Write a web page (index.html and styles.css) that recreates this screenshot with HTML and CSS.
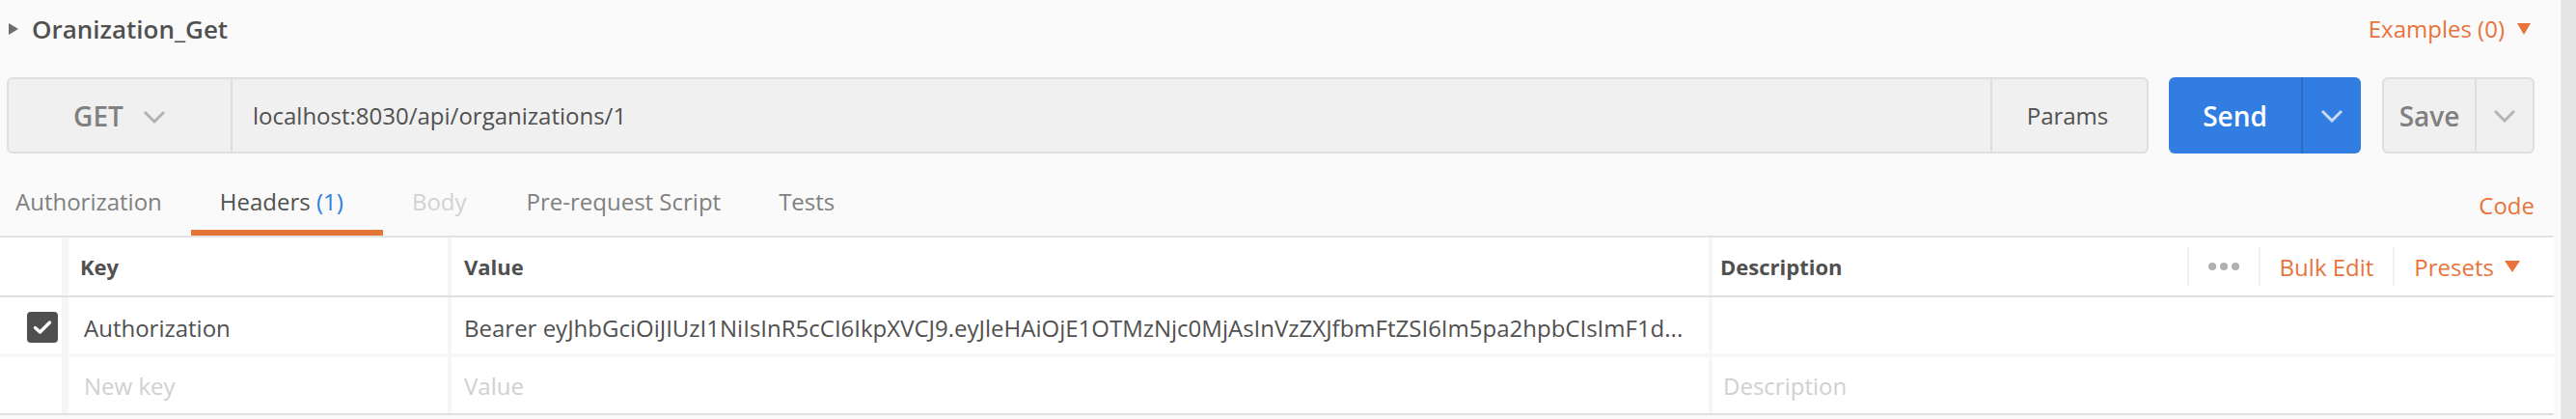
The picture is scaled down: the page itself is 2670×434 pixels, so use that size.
FILE: index.html
```html
<!DOCTYPE html>
<html>
<head>
<meta charset="utf-8">
<link rel="stylesheet" href="styles.css">
</head>
<body>
<div class="app">
  <div class="main">
    <div class="title-row">
      <div class="title"><span class="caret-right"></span><span class="title-text">Oranization_Get</span></div>
      <div class="examples">Examples (0)<span class="tri-down"></span></div>
    </div>

    <div class="bar">
      <div class="url-group">
        <div class="method">
          <span>GET</span>
          <svg class="chev" width="24" height="14" viewBox="0 0 24 14"><path d="M2 2 L12 12 L22 2" fill="none" stroke="#b4b4b4" stroke-width="3"/></svg>
        </div>
        <div class="url">localhost:8030/api/organizations/1</div>
        <div class="params">Params</div>
      </div>
      <div class="send">
        <div class="send-main">Send</div>
        <div class="send-arrow"><svg width="24" height="14" viewBox="0 0 24 14"><path d="M2 2 L12 12 L22 2" fill="none" stroke="#c9d9f0" stroke-width="3"/></svg></div>
      </div>
      <div class="save">
        <div class="save-main">Save</div>
        <div class="save-arrow"><svg width="24" height="14" viewBox="0 0 24 14"><path d="M2 2 L12 12 L22 2" fill="none" stroke="#b4b4b4" stroke-width="3"/></svg></div>
      </div>
    </div>

    <div class="tabs-row">
      <div class="tabs">
        <div class="tab first">Authorization</div>
        <div class="tab active">Headers <span class="count">(1)</span></div>
        <div class="tab disabled">Body</div>
        <div class="tab">Pre-request Script</div>
        <div class="tab">Tests</div>
      </div>
      <div class="code">Code</div>
    </div>

    <div class="table">
      <div class="trow thead">
        <div class="cell c-check"></div>
        <div class="vsep wide"></div>
        <div class="cell c-key">Key</div>
        <div class="vsep"></div>
        <div class="cell c-val">Value</div>
        <div class="vsep"></div>
        <div class="cell c-desc">
          <span>Description</span>
          <div class="tools">
            <div class="tool dots"><span></span><span></span><span></span></div>
            <div class="tool orange">Bulk Edit</div>
            <div class="tool orange">Presets<span class="tri-down small"></span></div>
          </div>
        </div>
      </div>
      <div class="trow body-row">
        <div class="cell c-check"><span class="checkbox"><svg width="20" height="16" viewBox="0 0 20 16"><path d="M2.5 8.5 L7.5 13 L17.5 3" fill="none" stroke="#fff" stroke-width="3.4" stroke-linecap="round" stroke-linejoin="round"/></svg></span></div>
        <div class="vsep wide"></div>
        <div class="cell c-key in">Authorization</div>
        <div class="vsep"></div>
        <div class="cell c-val in"><span class="ellipsis">Bearer eyJhbGciOiJIUzI1NiIsInR5cCI6IkpXVCJ9.eyJleHAiOjE1OTMzNjc0MjAsInVzZXJfbmFtZSI6Im5pa2hpbCIsImF1d...</span></div>
        <div class="vsep"></div>
        <div class="cell c-desc in"></div>
      </div>
      <div class="trow body-row last">
        <div class="cell c-check"></div>
        <div class="vsep wide"></div>
        <div class="cell c-key in ph">New key</div>
        <div class="vsep"></div>
        <div class="cell c-val in ph">Value</div>
        <div class="vsep"></div>
        <div class="cell c-desc in ph">Description</div>
      </div>
    </div>
  </div>
  <div class="scrollbar"></div>
</div>
</body>
</html>
```

FILE: styles.css
```css
* { box-sizing: border-box; }
html, body { margin: 0; padding: 0; }
body {
  background: #fafafa;
  font-family: "Open Sans", "Noto Sans", sans-serif;
  color: #505050;
  width: 2670px;
  height: 434px;
  overflow: hidden;
}
.app { display: flex; height: 434px; }
.main { width: 2654px; display: flex; flex-direction: column; }
.scrollbar { width: 16px; background: #e4e4e4; border-left: 1px solid #ececec; }

/* title */
.title-row {
  height: 60px;
  display: flex;
  align-items: center;
  justify-content: space-between;
  padding: 0 31px 0 9px;
}
.title { display: flex; align-items: center; }
.caret-right {
  width: 0; height: 0;
  border-left: 10px solid #6e6e6e;
  border-top: 6px solid transparent;
  border-bottom: 6px solid transparent;
  margin-right: 14px;
}
.title-text { font-size: 26px; font-weight: 600; line-height: 26px; color: #505050; }
.examples {
  font-size: 24px; line-height: 24px; color: #e8743b;
  display: flex; align-items: center;
}
.tri-down {
  width: 0; height: 0;
  border-top: 12px solid #e8743b;
  border-left: 7.5px solid transparent;
  border-right: 7.5px solid transparent;
  margin-left: 13px;
}
.tri-down.small { margin-left: 11px; border-top-width: 12px; border-left-width: 8px; border-right-width: 8px; }

/* request bar */
.bar {
  display: flex;
  height: 79px;
  margin-top: 20px;
  padding: 0 27px 0 7px;
}
.url-group {
  flex: 1;
  display: flex;
  background: #f0f0f0;
  border: 2px solid #dfdfdf;
  border-radius: 6px;
}
.method {
  width: 232px;
  border-right: 2px solid #dfdfdf;
  display: flex; align-items: center; justify-content: center;
  gap: 20px;
  font-size: 28px; font-weight: 600; color: #808080;
}
.method .chev { margin-top: 2px; }
.url {
  flex: 1;
  display: flex; align-items: center;
  padding-left: 21px;
  font-size: 24px; color: #505050;
}
.params {
  width: 162px;
  border-left: 2px solid #dfdfdf;
  display: flex; align-items: center; justify-content: center;
  font-size: 24px; color: #505050;
  padding-right: 4px;
}
.send {
  width: 199px;
  margin-left: 21px;
  display: flex;
  background: #317de2;
  border-radius: 6px;
  color: #fff;
}
.send-main {
  width: 139px;
  display: flex; align-items: center; justify-content: center;
  font-size: 28px; font-weight: 600;
  border-right: 2px solid #2a6cc6;
}
.send-arrow, .save-arrow {
  flex: 1;
  display: flex; align-items: center; justify-content: center;
}
.save {
  width: 158px;
  margin-left: 22px;
  display: flex;
  background: #f0f0f0;
  border: 2px solid #dfdfdf;
  border-radius: 6px;
}
.save-main {
  width: 96px;
  display: flex; align-items: center; justify-content: center;
  font-size: 28px; font-weight: 600; color: #808080;
  border-right: 2px solid #dfdfdf;
}

/* tabs */
.tabs-row {
  display: flex;
  justify-content: space-between;
  align-items: stretch;
  margin-top: 20px;
  margin-right: 7px;
  padding-right: 20px;
  border-bottom: 2px solid #e2e2e2;
}
.tabs { display: flex; }
.tab {
  height: 65px;
  display: flex; align-items: center;
  padding: 0 30px;
  border-bottom: 6px solid transparent;
  font-size: 24px; line-height: 24px; color: #808080;
  white-space: pre;
}
.tab.first { padding-left: 16px; }
.tab.active { color: #505050; border-bottom-color: #e57536; padding-right: 41px; }
.tab.disabled { color: #d2d2d2; padding-right: 31px; }
.tab.disabled + .tab { padding-left: 31px; }
.count { color: #2f7de1; }
.code {
  display: flex; align-items: center;
  padding-top: 3px;
  font-size: 24px; line-height: 24px; color: #e8743b;
}

/* table */
.table {
  margin-right: 7px;
  background: #fff;
}
.trow {
  display: grid;
  grid-template-columns: 64px 7px 393px 4px 1303px 4px 1fr;
}
.thead { height: 62px; border-bottom: 2px solid #e0e0e0; }
.body-row { height: 62px; border-bottom: 4px solid #f6f6f6; }
.body-row.last { border-bottom: 2px solid #e0e0e0; height: 60px; }
.vsep { background: #f6f6f6; }
.cell {
  display: flex; align-items: center;
  min-width: 0;
  font-size: 24px;
}
.thead .cell { font-size: 22px; font-weight: 700; color: #505050; }
.thead .c-key { padding-left: 12px; }
.thead .c-val { padding-left: 13px; }
.thead .c-desc { padding-left: 8px; justify-content: space-between; }
.in { color: #505050; }
.c-key.in { padding-left: 16px; }
.c-val.in { padding-left: 13px; padding-right: 20px; }
.c-desc.in { padding-left: 11px; }
.ph { color: #d0d0d0; }
.ellipsis { overflow: hidden; white-space: nowrap; text-overflow: ellipsis; }
.c-check { justify-content: flex-start; padding-left: 28px; }
.checkbox {
  width: 32px; height: 32px;
  background: #4f4f4f;
  border-radius: 4px;
  display: flex; align-items: center; justify-content: center;
  margin-top: 4px;
}
.body-row .c-key.in, .body-row .c-val.in { padding-top: 4px; }
.body-row.last .cell { padding-top: 0; }

.tools { display: flex; align-items: center; height: 40px; padding-right: 15px; }
.tool {
  height: 40px;
  display: flex; align-items: center;
  padding: 0 20px;
  border-left: 2px solid #f0f0f0;
  font-size: 24px; font-weight: 400;
}
.tool.orange { color: #e8743b; }
.dots span {
  width: 8px; height: 8px; border-radius: 50%;
  background: #b0b0b0; margin-right: 4px;
}
.dots span:last-child { margin-right: 0; }
```
